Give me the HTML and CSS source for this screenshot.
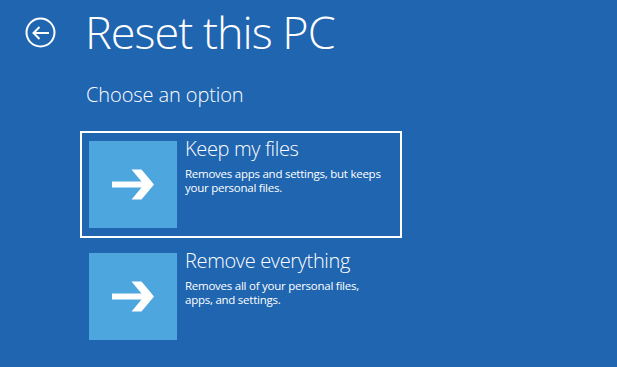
FILE: index.html
```html
<!DOCTYPE html>
<html lang="en">
<head>
<meta charset="utf-8">
<title>Reset this PC</title>
<link rel="stylesheet" href="styles.css">
</head>
<body>
<main class="page">
  <header class="head">
    <button class="back" aria-label="Back">
      <svg width="31" height="31" viewBox="0 0 31 31" aria-hidden="true">
        <circle cx="15.5" cy="15.5" r="14" fill="none" stroke="#fff" stroke-width="2"/>
        <path d="M24 16H8.5M14.5 10L8.5 16L14.5 22" fill="none" stroke="#fff" stroke-width="2"/>
      </svg>
    </button>
    <h1 class="title">Reset this PC</h1>
  </header>
  <section class="content">
    <h2 class="subtitle">Choose an option</h2>
    <ul class="options">
      <li class="option selected">
        <span class="tile">
          <svg width="88" height="87" viewBox="0 0 88 87" aria-hidden="true">
            <path d="M23 40.5H57V46.5H23Z M42.5 28.5H52.5L65 43.5L52.5 58.5H42.5L55 43.5Z" fill="#fff"/>
          </svg>
        </span>
        <span class="text">
          <span class="name">Keep my files</span>
          <span class="desc">Removes apps and settings, but keeps your personal files.</span>
        </span>
      </li>
      <li class="option">
        <span class="tile">
          <svg width="88" height="87" viewBox="0 0 88 87" aria-hidden="true">
            <path d="M23 40.5H57V46.5H23Z M42.5 28.5H52.5L65 43.5L52.5 58.5H42.5L55 43.5Z" fill="#fff"/>
          </svg>
        </span>
        <span class="text">
          <span class="name">Remove everything</span>
          <span class="desc">Removes all of your personal files, apps, and settings.</span>
        </span>
      </li>
    </ul>
  </section>
</main>
</body>
</html>
```
FILE: styles.css
```css
html, body {
  margin: 0;
  padding: 0;
  height: 100%;
}
body {
  background: #1f65b0;
  color: #fff;
  font-family: "Open Sans", "Noto Sans", sans-serif;
  overflow: hidden;
}
.page {
  padding: 17px 0 0 25px;
}
.head {
  display: flex;
  align-items: flex-start;
  gap: 29px;
}
.back {
  display: block;
  padding: 0;
  margin: 0;
  border: 0;
  background: none;
  width: 31px;
  height: 31px;
}
.back svg {
  display: block;
}
.title {
  margin: -13px 0 0;
  font-size: 45px;
  font-weight: 300;
  line-height: 56px;
  letter-spacing: -1px;
}
.content {
  padding-left: 55px;
}
.subtitle {
  margin: 22px 0 0 6px;
  font-size: 20px;
  font-weight: 300;
  line-height: 26px;
  letter-spacing: -0.1px;
}
.options {
  list-style: none;
  margin: 23px 0 0;
  padding: 0;
  display: flex;
  flex-direction: column;
  gap: 5px;
  width: 322px;
}
.option {
  display: flex;
  gap: 8px;
  border: 2px solid transparent;
  padding: 8px 8px 8px 7px;
}
.option.selected {
  border-color: #fff;
}
.tile {
  flex: none;
  width: 88px;
  height: 87px;
  background: #4da6de;
}
.tile svg {
  display: block;
}
.text {
  display: flex;
  flex-direction: column;
  width: 200px;
}
.name {
  font-size: 20px;
  font-weight: 300;
  line-height: 16px;
  letter-spacing: -0.35px;
  white-space: nowrap;
}
.desc {
  margin-top: 9.5px;
  font-size: 11.5px;
  line-height: 14px;
  letter-spacing: -0.25px;
}
```
